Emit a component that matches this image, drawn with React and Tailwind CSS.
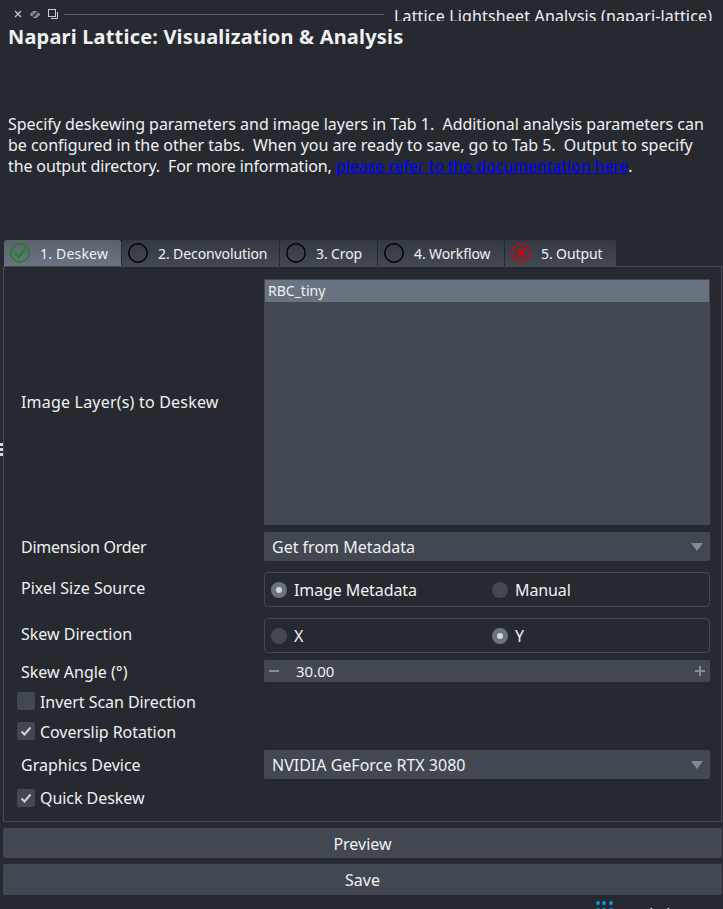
const font = 'font-["Noto_Sans","Open_Sans",sans-serif]'

function TabIcon({ status }) {
  if (status === 'ok') {
    return (
      <svg width="20" height="20" viewBox="0 0 20 20" className="shrink-0">
        <circle cx="10" cy="10" r="9.2" fill="none" stroke="#128a12" strokeWidth="1.4" />
        <path d="M5 10.500 8.800 14 15 6.500" fill="none" stroke="#128a12" strokeWidth="2" />
      </svg>
    )
  }
  if (status === 'bad') {
    return (
      <svg width="20" height="20" viewBox="0 0 20 20" className="shrink-0">
        <circle cx="10" cy="10" r="9.2" fill="none" stroke="#c00d14" strokeWidth="1.4" />
        <path d="M5.500 5.500l9 9M14.500 5.500l-9 9" fill="none" stroke="#c00d14" strokeWidth="2.8" />
      </svg>
    )
  }
  return (
    <svg width="20" height="20" viewBox="0 0 20 20" className="shrink-0">
      <circle cx="10" cy="10" r="9.2" fill="none" stroke="#000" strokeWidth="1.4" />
    </svg>
  )
}

function Tab({ label, status, width, active }) {
  return (
    <div
      className={`flex items-center h-[26px] pl-[6px] rounded-t-[3px] text-[14px] text-[#f0f1f2] ${width} ${
        active
          ? 'tracking-[0.2px] bg-gradient-to-b from-[#5a626c] to-[#6a7380]'
          : 'tracking-[-0.1px] bg-gradient-to-b from-[#353a42] to-[#414851]'
      }`}
    >
      <TabIcon status={status} />
      <span className="ml-[10px] whitespace-nowrap">{label}</span>
    </div>
  )
}

function Combo({ value }) {
  return (
    <div className="flex items-center justify-between h-[29px] pl-2 pr-[7px] bg-[#414851] rounded-[2px] text-[#f0f1f2]">
      <span>{value}</span>
      <span className="w-0 h-0 border-l-[6px] border-r-[6px] border-t-[8px] border-l-transparent border-r-transparent border-t-[#868b92]" />
    </div>
  )
}

function Radio({ label, on }) {
  return (
    <div className="flex items-center gap-[7px] w-[221px] shrink-0">
      <span className={`flex items-center justify-center w-4 h-4 rounded-full ${on ? 'bg-[#6a7380]' : 'bg-[#414851]'}`}>
        {on && <span className="w-[6px] h-[6px] rounded-full bg-[#d6d8db]" />}
      </span>
      <span className="tracking-[-0.1px]">{label}</span>
    </div>
  )
}

function RadioGroup({ items }) {
  return (
    <div className="flex items-center h-[35px] pl-[6px] border border-[#414851] rounded-[4px] text-[#f0f1f2] overflow-hidden">
      {items.map((it) => (
        <Radio key={it.label} label={it.label} on={it.on} />
      ))}
    </div>
  )
}

function Row({ label, labelClass, children, className }) {
  return (
    <div className={`flex items-center ${className}`}>
      <div className={`w-[260px] pl-[17px] shrink-0 text-[#f0f1f2] ${labelClass}`}>{label}</div>
      <div className="flex-1 min-w-0">{children}</div>
    </div>
  )
}

function Check({ label, on, className, textClass }) {
  return (
    <div className={`flex items-center gap-[5px] pl-[13px] h-[18px] text-[#f0f1f2] ${className}`}>
      <span className="flex items-center justify-center w-[18px] h-[18px] rounded-[2px] bg-[#414851]">
        {on && (
          <svg width="14" height="14" viewBox="0 0 14 14">
            <path d="M2.500 7.500 5.500 10.500 11.500 3.500" fill="none" stroke="#d1d2d4" strokeWidth="2" />
          </svg>
        )}
      </span>
      <span className={`tracking-[-0.05px] ${textClass}`}>{label}</span>
    </div>
  )
}

export default function App() {
  return (
    <div className={`relative h-[909px] overflow-hidden bg-[#262930] text-[16px] text-[#f0f1f2] ${font}`}>
      <div className="flex items-start h-[21px] overflow-hidden">
        <div className="flex items-center w-[64px] h-[28px] pl-[14px] gap-[8px] shrink-0">
          <svg width="8" height="8" viewBox="0 0 8 8">
            <path d="M1 1l6 6M7 1 1 7" stroke="#c9cbce" strokeWidth="1.3" />
          </svg>
          <svg width="10" height="9" viewBox="0 0 10 9">
            <path d="M.5 4.500C2 2 3.500 1.500 5 1.500s3 .5 4.500 3C8 7 6.500 7.500 5 7.500S2 7 .5 4.500Z" fill="#74787e" stroke="#a9acb0" />
            <path d="M8.500 .5 1.500 8.500" stroke="#262930" strokeWidth="1.200" />
          </svg>
          <svg width="10" height="10" viewBox="0 0 10 10">
            <rect x=".5" y=".5" width="7" height="7" fill="none" stroke="#c9cbce" />
            <path d="M9.500 3v6.500H3" fill="none" stroke="#c9cbce" />
          </svg>
        </div>
        <div className="w-[320px] h-px mt-[14px] bg-[#5a626c] shrink-0" />
        <div className="ml-[10px] whitespace-nowrap text-[16px] tracking-[0.16px] leading-[22px] pt-[5px]">
          Lattice Lightsheet Analysis (napari-lattice)
        </div>
      </div>

      <h1 className="mt-1 pl-2 text-[20px] tracking-[0.18px] leading-[24px] font-bold">
        Napari Lattice: Visualization &amp; Analysis
      </h1>

      <p className="mt-[65px] px-2 text-[16px] tracking-[-0.03px] leading-[21px] whitespace-nowrap">
        Specify deskewing parameters and image layers in Tab 1.&nbsp; Additional analysis parameters can
        <br />
        be configured in the other tabs.&nbsp; When you are ready to save, go to Tab 5.&nbsp; Output to specify
        <br />
        <span className="tracking-[-0.13px]">the output directory.&nbsp; For more information,</span>{' '}
        <span className="text-[#0000ff] underline tracking-[-0.08px]">please refer to the documentation here</span>.
      </p>

      <div className="flex gap-px mt-[63px] pl-1">
        <Tab label="1. Deskew" status="ok" width="w-[117px]" active />
        <Tab label="2. Deconvolution" status="none" width="w-[157px]" />
        <Tab label="3. Crop" status="none" width="w-[97px]" />
        <Tab label="4. Workflow" status="none" width="w-[126px]" />
        <Tab label="5. Output" status="bad" width="w-[111px]" />
      </div>

      <div className="h-[556px] ml-[3px] mr-px pt-[12px] pr-[11px] border border-[#414851]">
        <Row label="Image Layer(s) to Deskew" labelClass="tracking-[0.2px]" className="h-[246px]">
          <div className="h-[246px] bg-[#414851] p-px">
            <div className="h-[22px] pl-[3px] bg-[#6a7380] text-[14px] leading-[22px]">RBC_tiny</div>
          </div>
        </Row>
        <Row label="Dimension Order" labelClass="tracking-[-0.27px]" className="mt-[7px]">
          <Combo value="Get from Metadata" />
        </Row>
        <Row label="Pixel Size Source" labelClass="-translate-y-[2px]" className="mt-[11px]">
          <RadioGroup
            items={[
              { label: 'Image Metadata', on: true },
              { label: 'Manual', on: false },
            ]}
          />
        </Row>
        <Row label="Skew Direction" labelClass="-translate-y-[2px]" className="mt-[11px]">
          <RadioGroup
            items={[
              { label: 'X', on: false },
              { label: 'Y', on: true },
            ]}
          />
        </Row>
        <Row label="Skew Angle (°)" className="mt-[7px]">
          <div className="flex items-center justify-between h-[22px] pl-[5px] pr-[4px] bg-[#414851] rounded-[2px] -translate-y-px">
            <div className="flex items-center">
              <span className="w-[10px] h-[2px] bg-[#868b92]" />
              <span className="ml-[17px] text-[15px]">30.00</span>
            </div>
            <svg width="12" height="12" viewBox="0 0 12 12">
              <path d="M1 6h10M6 1v10" stroke="#868b92" strokeWidth="2" />
            </svg>
          </div>
        </Row>
        <Check label="Invert Scan Direction" className="mt-[8px]" textClass="translate-y-px" />
        <Check label="Coverslip Rotation" on className="mt-[12px]" textClass="translate-y-px" />
        <Row label="Graphics Device" className="mt-[10px]">
          <Combo value="NVIDIA GeForce RTX 3080" />
        </Row>
        <Check label="Quick Deskew" on className="mt-[10px]" />
      </div>

      <div className="flex flex-col gap-[6px] mt-[6px] ml-[3px] mr-px">
        <div className="flex items-center justify-center h-[30px] pt-px bg-[#414851] rounded-[2px]">Preview</div>
        <div className="flex items-center justify-center h-[31px] bg-[#414851] rounded-[2px]">Save</div>
      </div>

      {/* splitter handle on the left edge */}
      <div className="absolute left-0 top-[443px] flex flex-col gap-[2px]">
        <span className="w-[3px] h-[3px] bg-[#d6d8db]" />
        <span className="w-[3px] h-[3px] bg-[#d6d8db]" />
        <span className="w-[3px] h-[3px] bg-[#d6d8db]" />
      </div>

      {/* next dock widget, cut off by the window */}
      <div className="absolute left-[596px] top-[901px] flex items-start">
        <div className="grid grid-cols-3 gap-x-[2.300px] gap-y-[3px] w-[17px]">
          {[0, 1, 2, 3, 4, 5].map((i) => (
            <span key={i} className="w-[4px] h-[4px] rounded-full bg-[#009bde]" />
          ))}
        </div>
        <span className="ml-[9px] mt-[2px] text-[15px] leading-[20px]">Analytics</span>
      </div>
    </div>
  )
}
